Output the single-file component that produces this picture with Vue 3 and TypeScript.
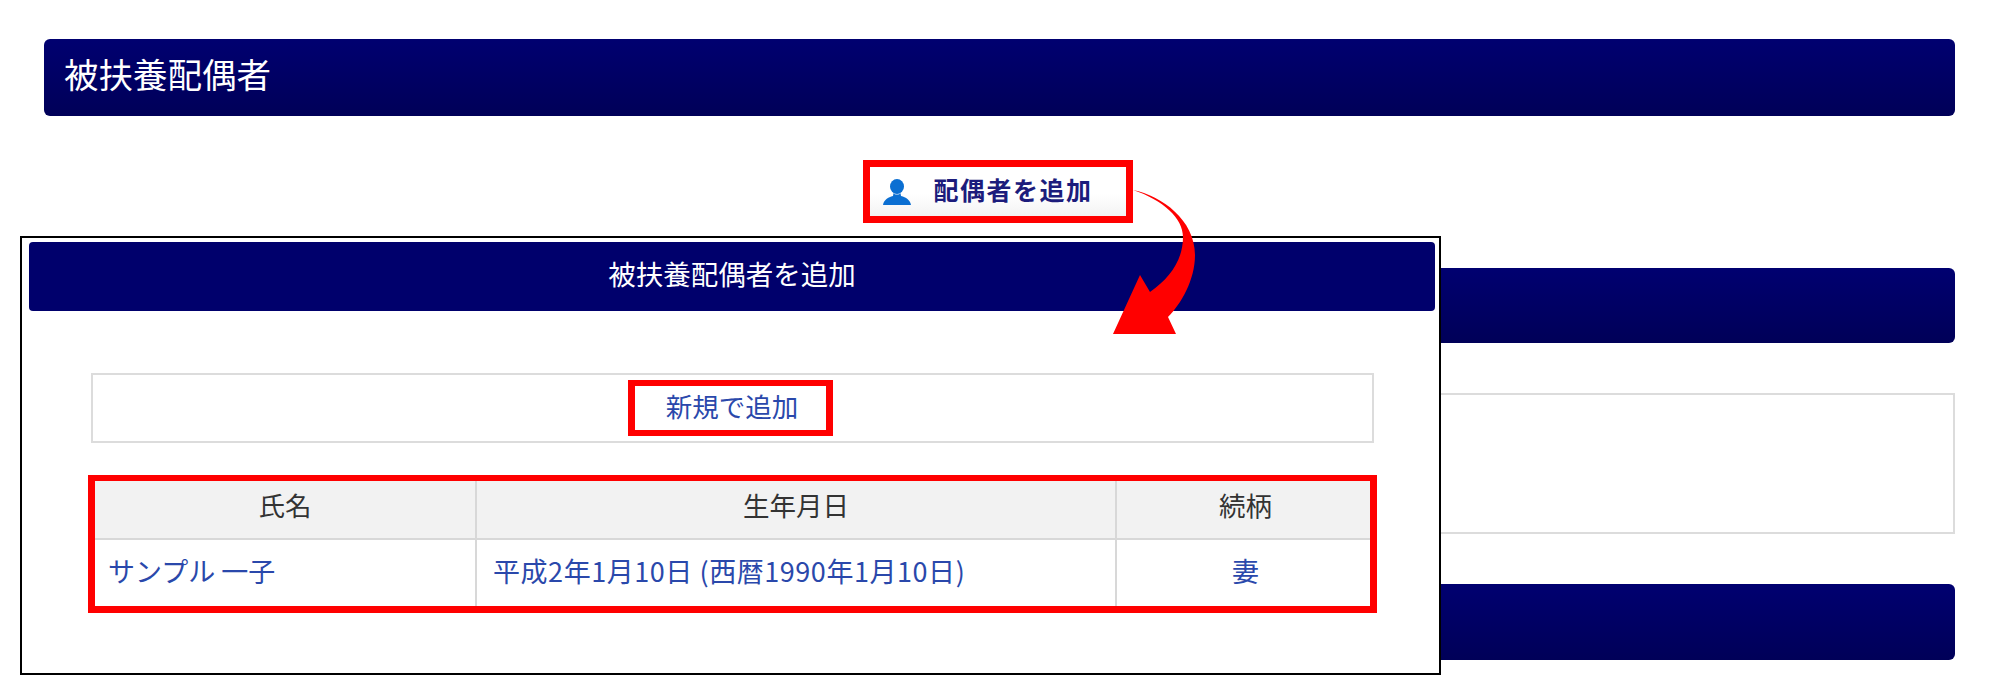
<script setup lang="ts">
interface Spouse {
  name: string;
  birthday: string;
  relation: string;
}

const columns = ['氏名', '生年月日', '続柄'];

const spouses: Spouse[] = [
  { name: 'サンプル 一子', birthday: '平成2年1月10日 (西暦1990年1月10日)', relation: '妻' },
];
</script>

<template>
  <div class="page">
    <h2 class="bar">被扶養配偶者</h2>

    <div class="add-row">
      <button class="add-btn" type="button">
        <svg class="user-icon" viewBox="0 0 28 26" width="28" height="26">
          <ellipse cx="14" cy="7.5" rx="7" ry="7.5" fill="#0b6fd2" />
          <path d="M10.5 14c1 2 6 2 7 0l.5 3c5 1.500 9 3.500 10 9H0c1-5.500 5-7.500 10-9z" fill="#0b6fd2" />
        </svg>
        <span class="add-label">配偶者を追加</span>
      </button>
    </div>

    <div class="bar second"></div>
    <div class="empty-box"></div>
    <div class="bar third"></div>

    <section class="popup">
      <header class="popup-bar">被扶養配偶者を追加</header>
      <div class="new-box">
        <a class="new-link">新規で追加</a>
      </div>
      <div class="table-mark">
        <table class="spouse-table">
          <thead>
            <tr>
              <th v-for="col in columns" :key="col">{{ col }}</th>
            </tr>
          </thead>
          <tbody>
            <tr v-for="s in spouses" :key="s.name">
              <td class="name">{{ s.name }}</td>
              <td class="birthday">{{ s.birthday }}</td>
              <td class="relation">{{ s.relation }}</td>
            </tr>
          </tbody>
        </table>
      </div>
    </section>

    <svg class="arrow" viewBox="1100 180 110 160" width="110" height="160">
      <path
        d="M1133 190C1162 196 1195 220 1195 255C1195 280 1181 304 1168 317L1176 334L1113 334L1140 275L1150 292C1170 278 1183 260 1183 237C1183 218 1163 200 1133 190Z"
        fill="#ff0000"
      />
    </svg>
  </div>
</template>

<style scoped>
.page {
  position: relative;
  box-sizing: border-box;
  width: 2000px;
  height: 692px;
  padding: 39px 45px 0 44px;
  overflow: hidden;
  background: #fff;
  font-family: "Noto Sans CJK JP", "Noto Sans", sans-serif;
  color: #333;
}

.bar {
  box-sizing: border-box;
  height: 77px;
  margin: 0;
  padding: 0 0 10px 20px;
  display: flex;
  align-items: center;
  border-radius: 6px;
  background: linear-gradient(#000070, #000058);
  color: #fff;
  font-size: 34.500px;
  font-weight: 400;
}

.add-row {
  display: flex;
  justify-content: center;
  margin-top: 44px;
  padding-right: 4px;
}

.add-btn {
  box-sizing: border-box;
  width: 270px;
  height: 63px;
  padding: 0 0 0 13px;
  display: flex;
  align-items: center;
  border: 7px solid #ff0000;
  background: linear-gradient(#fff 55%, #f3f3f3);
  color: #1c1c7c;
  font-family: inherit;
  font-size: 25px;
  font-weight: 700;
  letter-spacing: 1.500px;
}

.add-label {
  margin-bottom: 5px;
}

.user-icon {
  flex: none;
  margin-right: 23px;
}

.second {
  margin-top: 45px;
  height: 75px;
}

.empty-box {
  height: 141px;
  margin-top: 50px;
  box-sizing: border-box;
  border: 2px solid #dcdcdc;
}

.third {
  margin-top: 50px;
  height: 76px;
}

.popup {
  position: absolute;
  left: 20px;
  top: 236px;
  box-sizing: border-box;
  width: 1421px;
  height: 439px;
  padding: 4px 4px 0 7px;
  border: 2px solid #000;
  background: #fff;
}

.popup-bar {
  height: 69px;
  padding-bottom: 8px;
  box-sizing: border-box;
  display: flex;
  align-items: center;
  justify-content: center;
  border-radius: 4px;
  background: #00006c;
  color: #fff;
  font-size: 27.500px;
}

.new-box {
  box-sizing: border-box;
  height: 70px;
  margin: 62px 61px 0 62px;
  padding-right: 5px;
  display: flex;
  align-items: center;
  justify-content: center;
  border: 2px solid #dcdcdc;
}

.new-link {
  box-sizing: border-box;
  width: 205px;
  height: 56px;
  padding: 0 0 5px 4px;
  display: flex;
  align-items: center;
  justify-content: center;
  border: solid #ff0000;
  border-width: 6px 7px;
  color: #2a48ab;
  font-size: 26.500px;
}

.table-mark {
  box-sizing: border-box;
  width: 1289px;
  height: 138px;
  margin: 32px 0 0 59px;
  border: solid #ff0000;
  border-width: 7px;
  border-top-width: 6px;
}

.spouse-table {
  width: 100%;
  height: 100%;
  table-layout: fixed;
  border-collapse: collapse;
  font-size: 26.500px;
}

.spouse-table th {
  height: 47px;
  padding: 0 0 10px;
  background: #f2f2f2;
  border-bottom: 2px solid #d8d8d8;
  font-weight: 400;
  color: #333;
}

.spouse-table th:nth-child(1) {
  width: 380px;
}

.spouse-table th:nth-child(2) {
  width: 638px;
}

.spouse-table th:nth-child(3) {
  padding-left: 4px;
}

.spouse-table th + th,
.spouse-table td + td {
  border-left: 2px solid #d8d8d8;
}

.spouse-table td {
  padding: 0 0 6px 13px;
  color: #2a48ab;
  font-size: 27px;
}

.spouse-table td.birthday {
  padding-left: 16px;
  letter-spacing: 0.550px;
}

.spouse-table td.relation {
  padding-left: 4px;
  text-align: center;
}

.arrow {
  position: absolute;
  left: 1100px;
  top: 180px;
}
</style>
